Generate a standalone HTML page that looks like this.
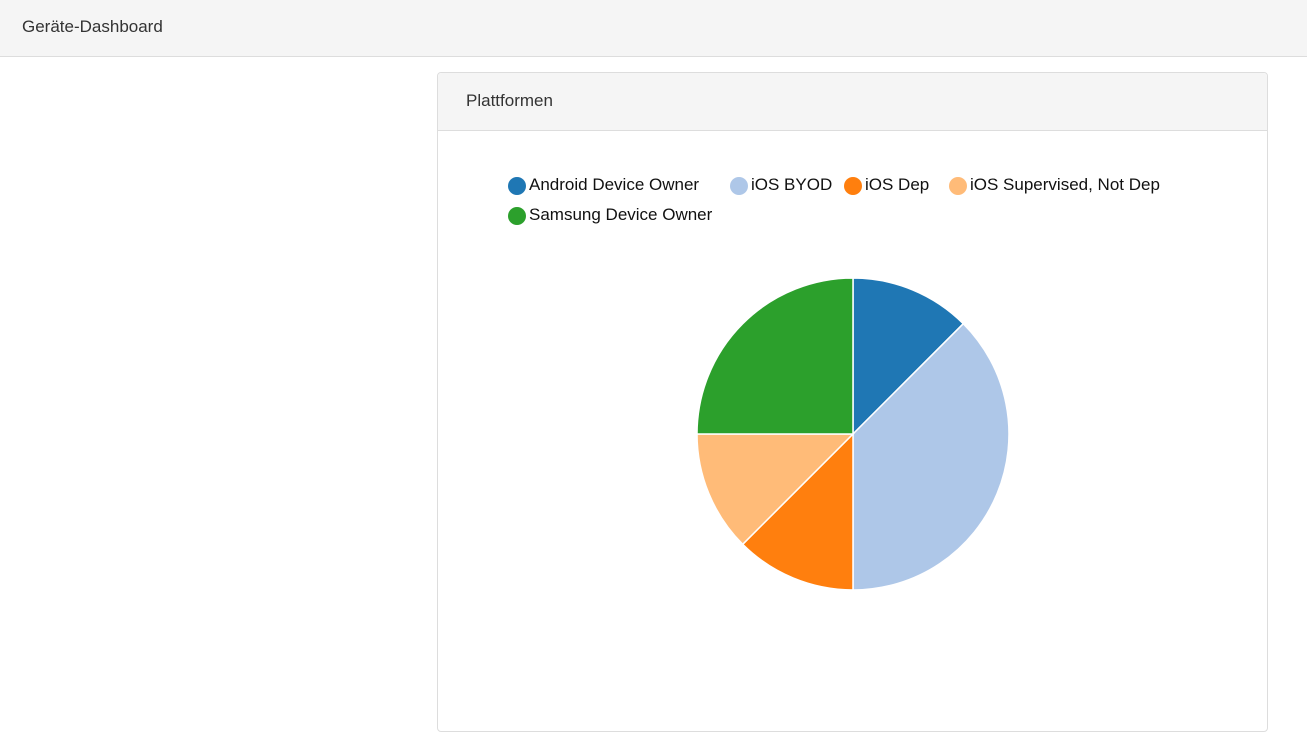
<!DOCTYPE html>
<html><head><meta charset="utf-8"><style>
body{margin:0;width:1307px;height:748px;background:#fff;font-family:"Liberation Sans",sans-serif;position:relative;overflow:hidden}
.top{position:absolute;left:0;top:0;width:1307px;height:56px;background:#f5f5f5;border-bottom:1px solid #ddd}
.top span{position:absolute;left:22px;top:17px;font-size:17px;color:#333}
.card{position:absolute;left:437px;top:72px;width:829px;height:658px;border:1px solid #ddd;border-radius:4px;background:#fff}
.ch{height:57px;background:#f5f5f5;border-bottom:1px solid #ddd;border-radius:4px 4px 0 0;position:relative}
.ch span{position:absolute;left:28px;top:18px;font-size:17px;color:#333}
.lg{position:absolute;font-size:17px;color:#111;white-space:nowrap}
.d{position:absolute;width:18px;height:18px;border-radius:50%}
</style></head><body>
<div class="top"><span>Geräte-Dashboard</span></div>
<div class="card"><div class="ch"><span>Plattformen</span></div></div>
<div class="d" style="left:508px;top:177px;background:#1f77b4"></div><div class="lg" style="left:529px;top:175px">Android Device Owner</div>
<div class="d" style="left:730px;top:177px;background:#aec7e8"></div><div class="lg" style="left:751px;top:175px">iOS BYOD</div>
<div class="d" style="left:844px;top:177px;background:#ff7f0e"></div><div class="lg" style="left:865px;top:175px">iOS Dep</div>
<div class="d" style="left:949px;top:177px;background:#ffbb78"></div><div class="lg" style="left:970px;top:175px">iOS Supervised, Not Dep</div>
<div class="d" style="left:508px;top:207px;background:#2ca02c"></div><div class="lg" style="left:529px;top:205px">Samsung Device Owner</div>
<svg style="position:absolute;left:0;top:0" width="1307" height="748">
<g stroke="#fff" stroke-width="1.5">
<path d="M853,434 L853,278 A156,156 0 0 1 963.3,323.7 Z" fill="#1f77b4"/>
<path d="M853,434 L963.3,323.7 A156,156 0 0 1 853,590 Z" fill="#aec7e8"/>
<path d="M853,434 L853,590 A156,156 0 0 1 742.7,544.3 Z" fill="#ff7f0e"/>
<path d="M853,434 L742.7,544.3 A156,156 0 0 1 697,434 Z" fill="#ffbb78"/>
<path d="M853,434 L697,434 A156,156 0 0 1 853,278 Z" fill="#2ca02c"/>
</g></svg>
</body></html>
